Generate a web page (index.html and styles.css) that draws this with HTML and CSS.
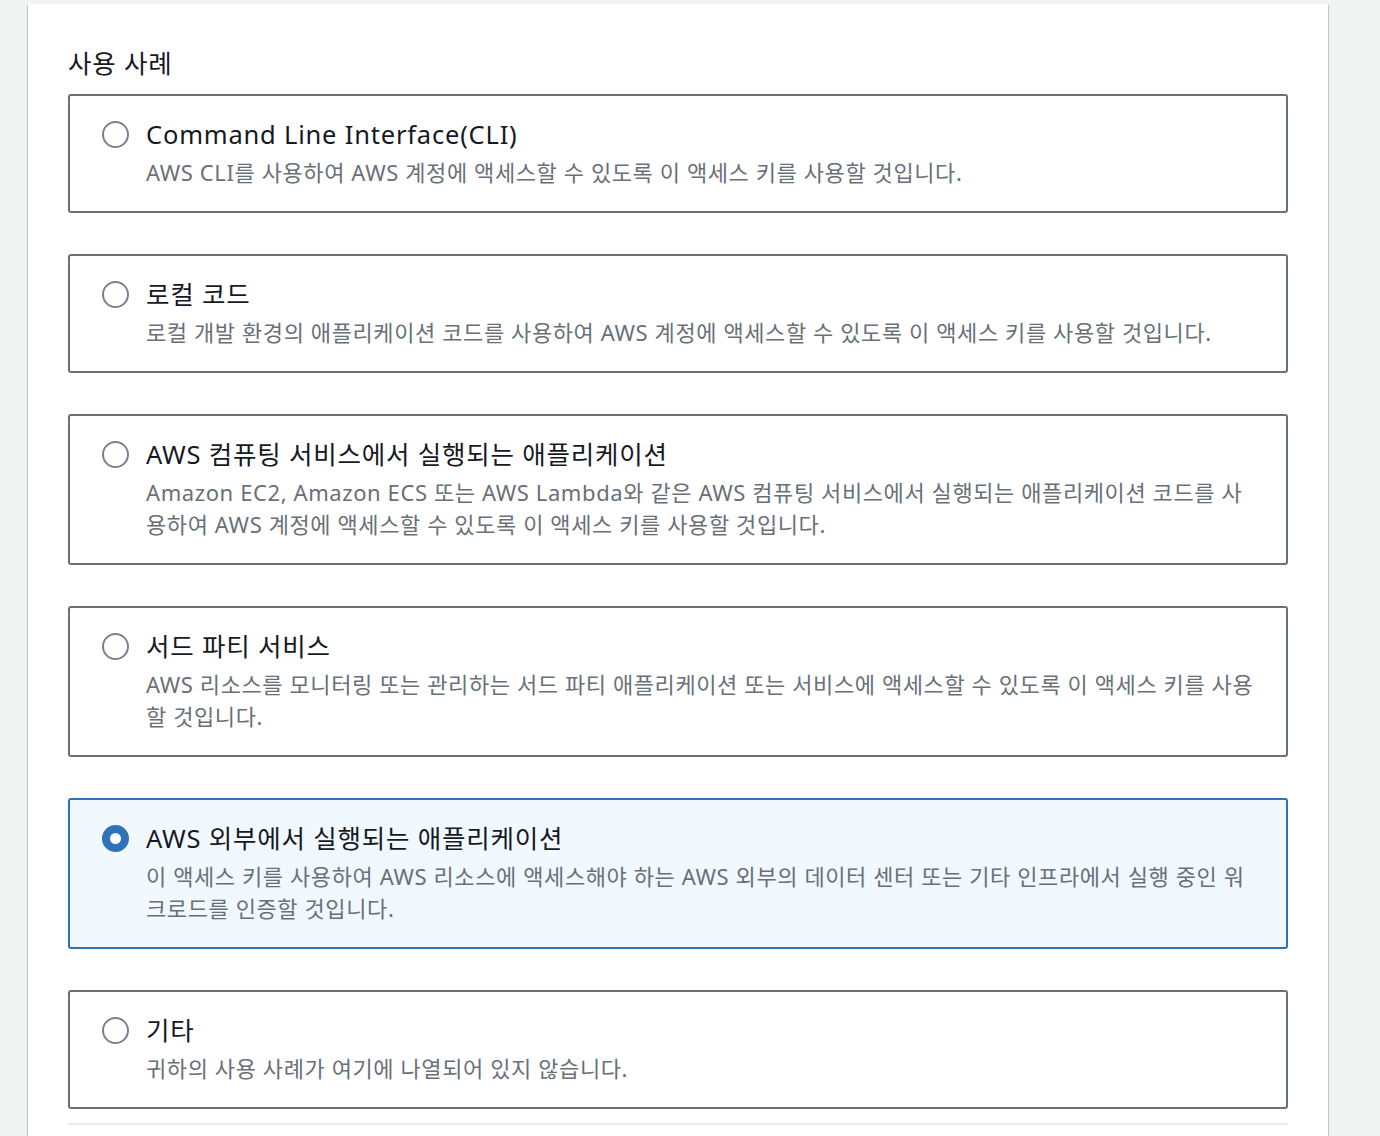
FILE: index.html
```html
<!DOCTYPE html>
<html lang="ko">
<head>
<meta charset="utf-8">
<title>사용 사례</title>
<link rel="stylesheet" href="styles.css">
</head>
<body>
<div class="panel">
  <h2 class="heading">사용 사례</h2>
  <div class="tiles">
    <div class="tile">
      <span class="radio"></span>
      <div class="text">
        <div class="title">Command Line Interface(CLI)</div>
        <div class="desc">AWS CLI를 사용하여 AWS 계정에 액세스할 수 있도록 이 액세스 키를 사용할 것입니다.</div>
      </div>
    </div>
    <div class="tile">
      <span class="radio"></span>
      <div class="text">
        <div class="title">로컬 코드</div>
        <div class="desc">로컬 개발 환경의 애플리케이션 코드를 사용하여 AWS 계정에 액세스할 수 있도록 이 액세스 키를 사용할 것입니다.</div>
      </div>
    </div>
    <div class="tile">
      <span class="radio"></span>
      <div class="text">
        <div class="title">AWS 컴퓨팅 서비스에서 실행되는 애플리케이션</div>
        <div class="desc">Amazon EC2, Amazon ECS 또는 AWS Lambda와 같은 AWS 컴퓨팅 서비스에서 실행되는 애플리케이션 코드를 사용하여 AWS 계정에 액세스할 수 있도록 이 액세스 키를 사용할 것입니다.</div>
      </div>
    </div>
    <div class="tile">
      <span class="radio"></span>
      <div class="text">
        <div class="title">서드 파티 서비스</div>
        <div class="desc">AWS 리소스를 모니터링 또는 관리하는 서드 파티 애플리케이션 또는 서비스에 액세스할 수 있도록 이 액세스 키를 사용할 것입니다.</div>
      </div>
    </div>
    <div class="tile selected">
      <span class="radio"></span>
      <div class="text">
        <div class="title">AWS 외부에서 실행되는 애플리케이션</div>
        <div class="desc">이 액세스 키를 사용하여 AWS 리소스에 액세스해야 하는 AWS 외부의 데이터 센터 또는 기타 인프라에서 실행 중인 워크로드를 인증할 것입니다.</div>
      </div>
    </div>
    <div class="tile">
      <span class="radio"></span>
      <div class="text">
        <div class="title">기타</div>
        <div class="desc">귀하의 사용 사례가 여기에 나열되어 있지 않습니다.</div>
      </div>
    </div>
  </div>
  <div class="divider"></div>
</div>
</body>
</html>
```

FILE: styles.css
```css
html, body {
  margin: 0;
  padding: 0;
}
body {
  background: #f2f3f3;
  font-family: "Noto Sans", "Noto Sans CJK KR", sans-serif;
  color: #16191f;
  height: 1136px;
  overflow: hidden;
}
.panel {
  margin: 4px 0 0 28px;
  width: 1300px;
  min-height: 1200px;
  box-sizing: border-box;
  background: #fff;
  padding: 43px 40px 0 40px;
  box-shadow: 0 1px 1px 0 rgba(0, 28, 36, 0.3), 1px 1px 1px 0 rgba(0, 28, 36, 0.15), -1px 1px 1px 0 rgba(0, 28, 36, 0.15);
}
.heading {
  margin: 0 0 15px 0;
  font-size: 25.5px;
  letter-spacing: 0.8px;
  line-height: 32px;
  font-weight: 400;
  color: #16191f;
}
.tiles {
  display: flex;
  flex-direction: column;
  gap: 41px;
}
.tile {
  display: flex;
  gap: 17px;
  padding: 22px 31px 23px 32px;
  border: 2px solid #687078;
  border-radius: 3px;
  background: #fff;
}
.tile.selected {
  border-color: #2e73b8;
  background: #f1f8fe;
}
.radio {
  flex: none;
  width: 27px;
  height: 27px;
  box-sizing: border-box;
  margin-top: 2.5px;
  border: 2px solid #7a828b;
  border-radius: 50%;
  background: #fff;
}
.selected .radio {
  border: 8px solid #2e73b8;
}
.text {
  flex: 1;
  min-width: 0;
}
.title {
  font-size: 25.5px;
  letter-spacing: 0.8px;
  line-height: 32px;
  color: #16191f;
}
.desc {
  margin-top: 6px;
  font-size: 22px;
  letter-spacing: 0.6px;
  line-height: 32px;
  color: #687078;
}
.divider {
  margin-top: 14px;
  height: 2px;
  background: #eaeded;
}
```
